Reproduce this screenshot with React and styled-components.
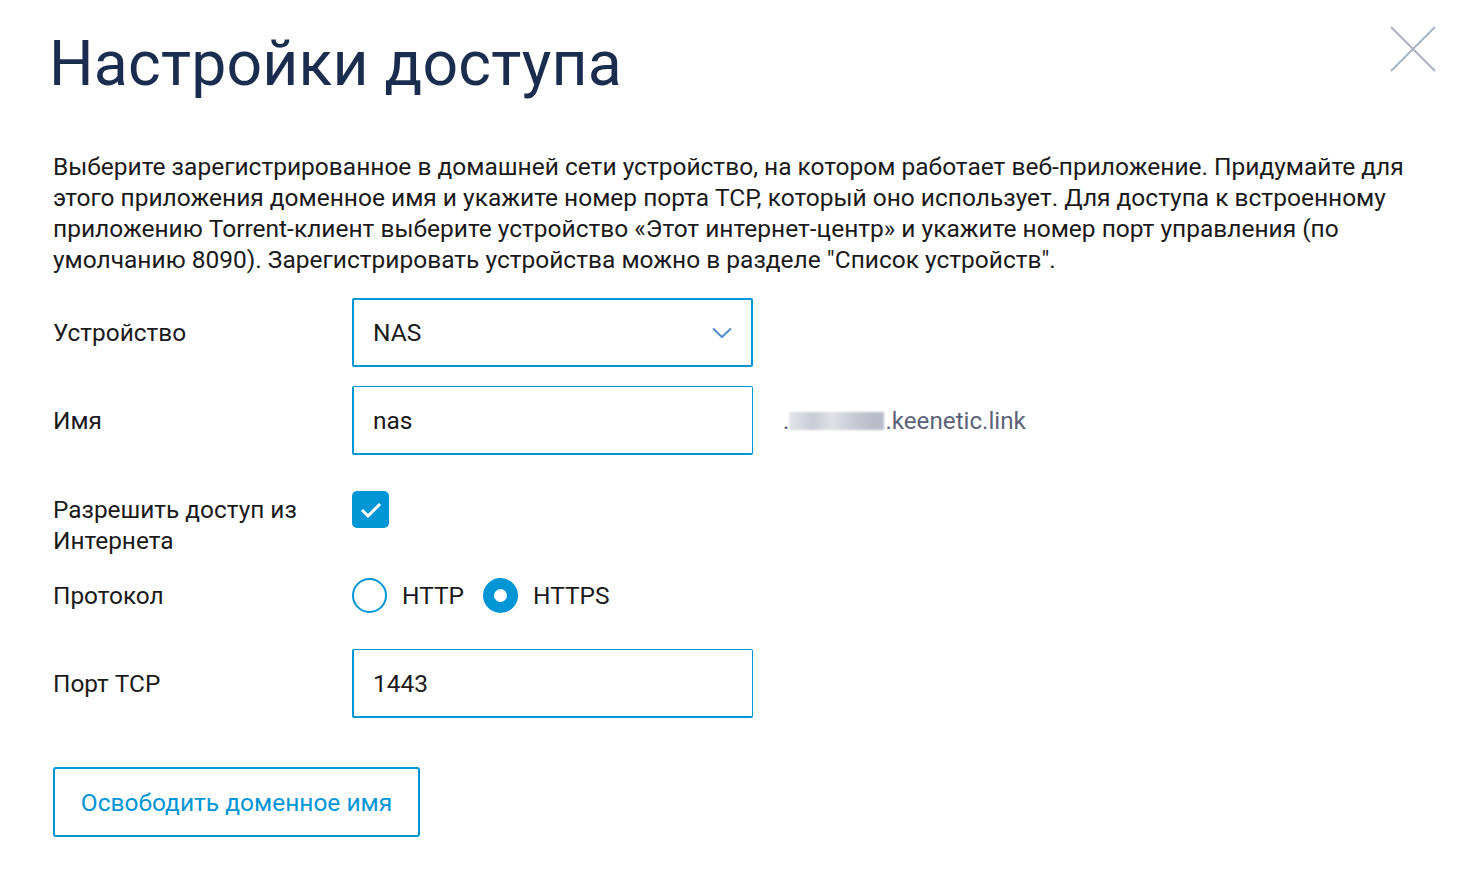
import React from 'react';
import styled, { createGlobalStyle } from 'styled-components';

const Global = createGlobalStyle`
  body {
    margin: 0;
    background: #fff;
    font-family: Roboto, "Noto Sans", sans-serif;
    color: #1a1a1a;
  }
`;

const Page = styled.div`
  position: relative;
  width: 1467px;
  min-height: 890px;
  padding: 24px 53px 0 53px;
  box-sizing: border-box;
`;

const Title = styled.h1`
  margin: 0 0 0 -4px;
  font-family: Roboto, sans-serif;
  font-weight: 400;
  font-size: 62.5px;
  line-height: 80px;
  color: #1b2d4f;
  letter-spacing: 0.2px;
`;

const Close = styled.button`
  position: absolute;
  top: 26px;
  right: 31px;
  width: 46px;
  height: 46px;
  padding: 0;
  border: 0;
  background: none;
`;

const Intro = styled.p`
  margin: 47px 0 23px;
  font-size: 24.5px;
  line-height: 31px;
  color: #1a1a1a;
  max-width: 1370px;
`;

const Form = styled.div`
  display: flex;
  flex-direction: column;
`;

const Row = styled.div`
  display: grid;
  grid-template-columns: 299px 401px auto;
  align-items: ${p => p.$top ? 'start' : 'center'};
  margin-bottom: ${p => p.$gap}px;
`;

const Label = styled.div`
  font-size: 24.4px;
  line-height: 31px;
  color: #1a1a1a;
`;

const Field = styled.div`
  height: 69px;
  box-sizing: border-box;
  border: 1px solid #0096d6;
  border-left-width: 2px;
  border-bottom-width: 2px;
  border-width: ${p => p.$focused ? '2px' : null};
  border-radius: 2px;
  padding: 0 19px;
  display: flex;
  align-items: center;
  justify-content: space-between;
  font-size: 24.5px;
  color: #1a1a1a;
`;

const Suffix = styled.div`
  margin-left: 30px;
  font-size: 24.2px;
  color: #5c6278;
  display: flex;
  align-items: center;
`;

const Blur = styled.span`
  display: inline-block;
  width: 95px;
  height: 18px;
  background: linear-gradient(90deg, #e4e5ea 0%, #c9ccd5 25%, #e0e1e6 45%, #c6c9d2 70%, #b9bcc8 90%);
  filter: blur(1px);
  margin-right: 1px;
`;

const Checkbox = styled.div`
  width: 37px;
  height: 37px;
  margin-top: -3px;
  border-radius: 5px;
  background: #0096d6;
  display: flex;
  align-items: center;
  justify-content: center;
`;

const Radios = styled.div`
  display: flex;
  align-items: center;
`;

const Radio = styled.div`
  width: 35px;
  height: 35px;
  box-sizing: border-box;
  border-radius: 50%;
  border: ${p => p.$checked ? '11px solid #0096d6' : '2px solid #0096d6'};
  background: #fff;
  margin-right: 15px;
`;

const RadioText = styled.span`
  font-size: 24.5px;
  color: #1a1a1a;
  margin-right: 19px;
`;

const Button = styled.button`
  align-self: flex-start;
  width: 367px;
  height: 70px;
  border: 2px solid #0096d6;
  border-radius: 3px;
  background: #fff;
  color: #0096d6;
  font-family: Roboto, sans-serif;
  font-size: 24.5px;
  cursor: pointer;
`;

export default function App() {
  return (
    <Page>
      <Global />
      <Close aria-label="Закрыть">
        <svg width="46" height="46" viewBox="0 0 46 46">
          <path d="M1 1L45 45M45 1L1 45" stroke="#a9b3c1" strokeWidth="2" />
        </svg>
      </Close>
      <Title>Настройки доступа</Title>
      <Intro>
        Выберите зарегистрированное в домашней сети устройство, на котором работает веб-приложение. Придумайте для
        этого приложения доменное имя и укажите номер порта TCP, который оно использует. Для доступа к встроенному
        приложению Torrent-клиент выберите устройство «Этот интернет-центр» и укажите номер порт управления (по
        умолчанию 8090). Зарегистрировать устройства можно в разделе "Список устройств".
      </Intro>
      <Form>
        <Row $gap={19}>
          <Label>Устройство</Label>
          <Field $focused>
            NAS
            <svg width="20" height="12" viewBox="0 0 20 12">
              <path d="M1 1.5L10 10L19 1.5" fill="none" stroke="#4f8fcf" strokeWidth="2" />
            </svg>
          </Field>
        </Row>
        <Row $gap={39}>
          <Label>Имя</Label>
          <Field>nas</Field>
          <Suffix>.<Blur />.keenetic.link</Suffix>
        </Row>
        <Row $gap={22} $top>
          <Label>Разрешить доступ из<br />Интернета</Label>
          <Checkbox>
            <svg width="22" height="16" viewBox="0 0 22 16">
              <path d="M2 8L8 14L20 2" fill="none" stroke="#fff" strokeWidth="3" />
            </svg>
          </Checkbox>
        </Row>
        <Row $gap={36}>
          <Label>Протокол</Label>
          <Radios>
            <Radio />
            <RadioText>HTTP</RadioText>
            <Radio $checked />
            <RadioText>HTTPS</RadioText>
          </Radios>
        </Row>
        <Row $gap={49}>
          <Label>Порт TCP</Label>
          <Field>1443</Field>
        </Row>
        <Button>Освободить доменное имя</Button>
      </Form>
    </Page>
  );
}
